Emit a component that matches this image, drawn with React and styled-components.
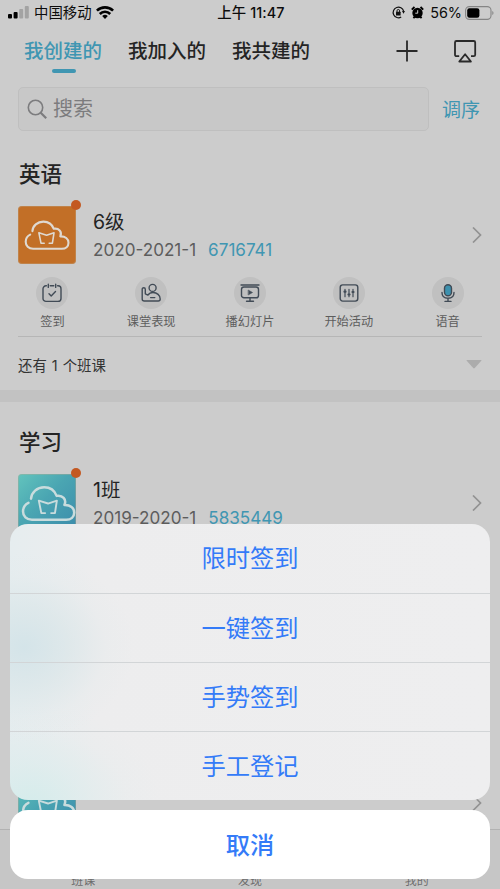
import styled, { createGlobalStyle } from "styled-components";

const GlobalStyle = createGlobalStyle`
  * {
    box-sizing: border-box;
  }
  body {
    margin: 0;
    background: #cccccc;
    font-family: Inter, "Noto Sans CJK SC", sans-serif;
  }
  svg {
    display: block;
    flex: none;
  }
`;

const Screen = styled.div`
  position: relative;
  display: flex;
  flex-direction: column;
  width: 500px;
  height: 889px;
  overflow: hidden;
  background: #cccccc;
  color: #242424;
`;

const StatusBar = styled.header`
  display: grid;
  grid-template-columns: 1fr auto 1fr;
  align-items: center;
  height: 25px;
  padding: 0 6px 0 8px;
  font-size: 14.4px;
  line-height: 25px;
  color: #0c0c0c;
  white-space: nowrap;
`;

const StatusGroup = styled.div`
  display: flex;
  align-items: center;
  justify-content: ${(p) => (p.$end ? "flex-end" : "flex-start")};
  gap: ${(p) => p.$gap}px;
`;

const Clock = styled.div`
  font-weight: 500;
  letter-spacing: 0.1px;
`;

const NavBar = styled.nav`
  display: flex;
  align-items: flex-start;
  height: 62px;
  padding: 10px 23px 0 24px;
`;

const Tab = styled.div`
  display: flex;
  flex-direction: column;
  align-items: center;
  width: 78px;
  margin-right: 26px;
  font-size: 19.5px;
  font-weight: 500;
  line-height: 33px;
  white-space: nowrap;
  color: ${(p) => (p.$active ? "#4096b2" : "#242424")};

  &::after {
    content: "";
    width: 24px;
    height: 4px;
    margin-top: 1px;
    margin-left: 2px;
    border-radius: 2px;
    background: ${(p) => (p.$active ? "#4096b2" : "transparent")};
  }
`;

const NavActions = styled.div`
  display: flex;
  align-items: center;
  gap: 35px;
  margin-left: auto;
  height: 31px;
`;

const SearchRow = styled.div`
  display: flex;
  align-items: center;
  height: 44px;
  padding: 0 20px 0 18px;
`;

const SearchBox = styled.div`
  display: flex;
  align-items: center;
  gap: 6px;
  width: 411px;
  height: 44px;
  padding-left: 8px;
  border: 1px solid #bfbfbf;
  border-radius: 5px;
  background: #c8c8c8;
  color: #7c7c7e;
  font-size: 20px;
  line-height: 40px;
`;

const SortLink = styled.div`
  margin-left: auto;
  padding-bottom: 2px;
  font-size: 19px;
  color: #4096b2;
`;

const Section = styled.section`
  padding: 0 18px;
`;

const SectionTitle = styled.h2`
  margin: 0;
  padding: ${(p) => p.$top}px 0 0 1px;
  height: ${(p) => p.$top + 47}px;
  font-size: 21.5px;
  font-weight: 500;
  line-height: 31px;
`;

const CourseHead = styled.div`
  display: flex;
  align-items: center;
  height: 58px;
  margin-top: ${(p) => p.$top || 0}px;
`;

const Cover = styled.div`
  position: relative;
  width: 58px;
  height: 58px;
  border-radius: 4px;
  background: ${(p) =>
    p.$teal ? "linear-gradient(135deg, #62c4bd 0%, #4aa5b2 45%, #3b8bab 100%)" : "#c26f27"};
  box-shadow: inset 0 0 0 1px rgba(190, 170, 140, 0.35);
`;

const Dot = styled.span`
  position: absolute;
  top: -6px;
  right: -5px;
  width: 10px;
  height: 10px;
  border-radius: 50%;
  background: #c35821;
`;

const CourseText = styled.div`
  display: flex;
  flex-direction: column;
  margin-left: 17px;
  white-space: nowrap;
`;

const CourseName = styled.div`
  font-size: 19.5px;
  line-height: 27px;
  padding-top: 3px;
`;

const CourseMeta = styled.div`
  display: flex;
  gap: 12px;
  height: 28px;
  font-size: 17.1px;
  line-height: 27px;
  color: #5d5d5d;
`;

const CourseCode = styled.span`
  color: #4096b2;
`;

const Chevron = styled.div`
  margin-left: auto;
`;

const Actions = styled.div`
  display: flex;
  justify-content: space-between;
  height: 72px;
  padding: 13px 0 0;
  margin: 0 -15px;
`;

const Action = styled.div`
  display: flex;
  flex-direction: column;
  align-items: center;
  width: 100px;
  font-size: 12.2px;
  line-height: 26px;
  color: #5d5d5d;
`;

const ActionIcon = styled.div`
  display: flex;
  align-items: center;
  justify-content: center;
  width: 32px;
  height: 32px;
  border-radius: 50%;
  background: #c0c0c0;
`;

const MoreRow = styled.div`
  display: flex;
  align-items: center;
  justify-content: space-between;
  height: 54px;
  padding-top: 2px;
  border-top: 1px solid #b6b6b6;
  font-size: 14.4px;
  word-spacing: 1px;
  color: #333333;
`;

const Divider = styled.div`
  height: 12px;
  background: #c2c2c2;
`;

const Content = styled.main`
  flex: 1;
  min-height: 0;
  overflow: hidden;
`;

const TabBar = styled.footer`
  display: flex;
  align-items: flex-end;
  height: 60px;
  border-top: 1px solid #b2b2b2;
  background: #c6c6c6;
  font-size: 12px;
  line-height: 17px;
  color: #6c6c6c;
`;

const TabItem = styled.div`
  flex: 1;
  text-align: center;
`;

const Sheet = styled.div`
  position: absolute;
  left: 10px;
  right: 10px;
  bottom: 10px;
  display: flex;
  flex-direction: column;
  gap: 10px;
  color: #347bf8;
  font-size: 24.3px;
  text-align: center;
`;

const Options = styled.div`
  overflow: hidden;
  border-radius: 18px;
  background:
    radial-gradient(
      ellipse 110px 95px at 14px 123px,
      rgba(210, 227, 232, 0.9) 0%,
      rgba(213, 228, 231, 0.55) 40%,
      rgba(222, 232, 234, 0.18) 75%,
      rgba(230, 236, 238, 0) 100%
    ),
    radial-gradient(
      ellipse 130px 100px at 20px 280px,
      rgba(212, 236, 235, 0.95) 0%,
      rgba(217, 236, 236, 0.55) 40%,
      rgba(225, 236, 237, 0.18) 75%,
      rgba(230, 236, 238, 0) 100%
    ),
    linear-gradient(90deg, #e6edef 0, #ededee 85px, #eeeeef 100%);
`;

const Option = styled.div`
  height: 69px;
  line-height: 69px;

  & + & {
    border-top: 1px solid #d2d5d7;
  }
`;

const Cancel = styled.div`
  height: 69px;
  border-radius: 18px;
  background: #ffffff;
  font-weight: 500;
  line-height: 70px;
`;

const SignalIcon = () => (
  <svg width="22" height="14" viewBox="0 0 22 14">
    <rect x="0" y="8" width="4" height="4.5" rx="1" fill="#000" />
    <rect x="5.6" y="6" width="4" height="6.5" rx="1" fill="#000" />
    <rect x="11.2" y="3" width="4" height="9.5" rx="1" fill="#a3a3a3" />
    <rect x="16.8" y="0" width="4" height="12.5" rx="1" fill="#a3a3a3" />
  </svg>
);

const WifiIcon = () => (
  <svg width="18" height="14" viewBox="0 0 18 14" fill="none" stroke="#000" strokeWidth="2.600">
    <path d="M.9 4.700a11.500 11.500 0 0 1 16.200 0" />
    <path d="M3.800 8a7.300 7.300 0 0 1 10.400 0" />
    <path d="M9 13 6.200 10.100a4 4 0 0 1 5.600 0Z" fill="#000" stroke="none" />
  </svg>
);

const LockIcon = () => (
  <svg width="13" height="13" viewBox="0 0 13 13" fill="none" stroke="#111" strokeWidth="1.2">
    <path d="M9.2 11A5.3 5.3 0 1 1 11.6 5.2" />
    <path d="M10 5.1h3l-1.5 2.6Z" fill="#111" stroke="none" />
    <rect x="4" y="5.8" width="4.6" height="3.6" rx=".5" fill="#111" stroke="none" />
    <path d="M5 6V4.8a1.3 1.3 0 0 1 2.6 0V6" strokeWidth="1" />
  </svg>
);

const AlarmIcon = () => (
  <svg width="13" height="13" viewBox="0 0 13 13">
    <circle cx="6.5" cy="7" r="5.2" fill="#000" />
    <path d="M.8 3.7 3.5 1M12.2 3.7 9.5 1M2.4 12.2l1.7-1.8M10.6 12.2 8.9 10.4" stroke="#000" strokeWidth="1.9" />
    <path d="M6.7 4.2v3H4.3" fill="none" stroke="#ccc" strokeWidth="1" />
  </svg>
);

const BatteryIcon = () => (
  <svg width="29" height="14" viewBox="0 0 29 14">
    <rect x=".6" y=".6" width="25.400" height="12.8" rx="3.8" fill="none" stroke="#858585" strokeWidth="1.1" />
    <rect x="2.2" y="2.3" width="12.2" height="9.4" rx="2.2" fill="#000" />
    <path d="M27.300 5c1.6.7 1.6 3.3 0 4Z" fill="#858585" />
  </svg>
);

const PlusIcon = () => (
  <svg width="22" height="22" viewBox="0 0 22 22" stroke="#292929" strokeWidth="1.8">
    <path d="M11 .5v21M.5 11h21" />
  </svg>
);

const CastIcon = () => (
  <svg width="24" height="24" viewBox="0 0 24 24" fill="none" stroke="#292929" strokeWidth="1.8" strokeLinejoin="round">
    <path d="M6.200 17.2H3.500a1.500 1.500 0 0 1-1.500-1.500V3.500A1.500 1.500 0 0 1 3.500 2h17.200a1.500 1.500 0 0 1 1.500 1.500v12.200a1.500 1.500 0 0 1-1.500 1.500H18" />
    <path d="m12.1 15.2 5.8 7.300H6.300Z" />
  </svg>
);

const SearchIcon = () => (
  <svg width="20" height="20" viewBox="0 0 20 20" fill="none" stroke="#7c7c7e" strokeWidth="1.6">
    <circle cx="8.500" cy="8.500" r="7.200" />
    <path d="m13.500 13.500 5.700 5.700" strokeWidth="2.2" />
  </svg>
);

const CloudLogo = ({ large }) => (
  <svg
    width="58"
    height="58"
    viewBox={large ? "3.500 4.500 48.500 48.500" : "0 0 58 58"}
    fill="none"
    stroke={large ? "#c9dcdd" : "#dfd9d1"}
    strokeWidth="2.1"
    strokeLinecap="round"
    strokeLinejoin="round"
  >
    <path d="M14.4 25.1c.4-5.3 5-9.5 11-9.5 4.7 0 8.600 2.500 10.400 7.200 4.800-.8 8.700 2.800 6.500 7.600 5-.2 8.200 2.500 8.200 6.300 0 3.700-2.800 6.100-6.700 6.100H15.100c-4.500 0-7.400-2.900-7.400-7 0-3.200 1.600-5.800 4.500-7.200" />
    <path d="M26.200 37.200h-3.200l-2.100-10.400 7.700 2.400 7.400-2.400-1.600 10.400h-3.200" strokeWidth="1.6" />
  </svg>
);

const ChevronIcon = () => (
  <svg width="10" height="16" viewBox="0 0 10 16" fill="none" stroke="#929292" strokeWidth="1.7">
    <path d="m1 .5 7.5 7.500L1 15.500" />
  </svg>
);

const LineIcon = ({ children }) => (
  <svg
    width="20"
    height="20"
    viewBox="0 0 20 20"
    fill="none"
    stroke="#414b56"
    strokeWidth="1.4"
    strokeLinecap="round"
    strokeLinejoin="round"
  >
    {children}
  </svg>
);

const actions = [
  {
    label: "签到",
    icon: (
      <>
        <path d="M4.4 2.8H4a3 3 0 0 0-3 3v9.600a3 3 0 0 0 3 3h12a3 3 0 0 0 3-3V5.800a3 3 0 0 0-3-3h-.4M8.200 2.800h3.600M6.300 1.200v3.200M13.700 1.200v3.200" />
        <path d="m7 10.700 2.200 2.200 4.300-4.300" />
      </>
    ),
  },
  {
    label: "课堂表现",
    icon: (
      <>
        <circle cx="11.600" cy="4.900" r="3.500" />
        <path d="M3.200 18h14c1.300 0 2-.8 2-2 0-3.700-3.200-6.500-7.200-6.500-2.300 0-4 1-5.100 2.600L4.300 10.800V6.200c0-1-.7-1.500-1.500-1.500S1.200 5.200 1.200 6.200V16c0 1.200.8 2 2 2ZM9.600 14.600h4.200" />
      </>
    ),
  },
  {
    label: "播幻灯片",
    icon: (
      <>
        <path d="M1 2h18" />
        <rect x="1.500" y="4" width="17" height="10.800" rx="2.400" />
        <path d="M10 15v3M6.500 18.200h7" />
        <path d="m8.500 7.200 4 2.300-4 2.300Z" fill="#414b56" strokeWidth=".6" />
      </>
    ),
  },
  {
    label: "开始活动",
    icon: (
      <>
        <rect x="1.200" y="1.900" width="17.600" height="16.200" rx="2.500" />
        <path d="M6 6.300v7.400M10 6.300v7.400M14 6.300v7.400" strokeWidth="1.200" />
        <path d="M5.500 8.700h1M9.500 11.500h1M13.500 9h1" strokeWidth="2.200" />
      </>
    ),
  },
  {
    label: "语音",
    icon: (
      <>
        <rect x="6.500" y="1.800" width="7" height="11" rx="3.500" fill="#3d91ae" />
        <path d="M4 9.500c0 3.800 2.500 5.800 6 5.800s6-2 6-5.800M10 15.300v2.900M7 18.400h6" />
      </>
    ),
  },
];

const Course = ({ name, term, code, teal, dot, top }) => (
  <CourseHead $top={top}>
    <Cover $teal={teal}>
      <CloudLogo large={teal} />
      {dot && <Dot />}
    </Cover>
    {name && (
      <CourseText>
        <CourseName>{name}</CourseName>
        <CourseMeta>
          <span>{term}</span>
          <CourseCode>{code}</CourseCode>
        </CourseMeta>
      </CourseText>
    )}
    <Chevron>
      <ChevronIcon />
    </Chevron>
  </CourseHead>
);

const App = () => {
  return (
    <>
      <GlobalStyle />
      <Screen>
        <StatusBar>
          <StatusGroup $gap={4}>
            <SignalIcon />
            <span>中国移动</span>
            <WifiIcon />
          </StatusGroup>
          <Clock>上午 11:47</Clock>
          <StatusGroup $end $gap={6}>
            <LockIcon />
            <AlarmIcon />
            <StatusGroup $gap={3}>
              <span>56%</span>
              <BatteryIcon />
            </StatusGroup>
          </StatusGroup>
        </StatusBar>
        <NavBar>
          <Tab $active>我创建的</Tab>
          <Tab>我加入的</Tab>
          <Tab>我共建的</Tab>
          <NavActions>
            <PlusIcon />
            <CastIcon />
          </NavActions>
        </NavBar>
        <Content>
          <SearchRow>
            <SearchBox>
              <SearchIcon />
              <span>搜索</span>
            </SearchBox>
            <SortLink>调序</SortLink>
          </SearchRow>
          <Section>
            <SectionTitle $top={28}>英语</SectionTitle>
            <Course name="6级" term="2020-2021-1" code="6716741" dot />
            <Actions>
              {actions.map((a) => (
                <Action key={a.label}>
                  <ActionIcon>
                    <LineIcon>{a.icon}</LineIcon>
                  </ActionIcon>
                  {a.label}
                </Action>
              ))}
            </Actions>
            <MoreRow>
              <span>还有 1 个班课</span>
              <svg width="16" height="9" viewBox="0 0 16 9">
                <path d="M1 0h14q1 0 .3.800L8.800 8q-.8.800-1.600 0L.7.800Q0 0 1 0Z" fill="#acacac" />
              </svg>
            </MoreRow>
          </Section>
          <Divider />
          <Section>
            <SectionTitle $top={25}>学习</SectionTitle>
            <Course name="1班" term="2019-2020-1" code="5835449" teal dot />
            <Course teal top={242} />
          </Section>
        </Content>
        <TabBar>
          <TabItem>班课</TabItem>
          <TabItem>发现</TabItem>
          <TabItem>我的</TabItem>
        </TabBar>
        <Sheet>
          <Options>
            <Option>限时签到</Option>
            <Option>一键签到</Option>
            <Option>手势签到</Option>
            <Option>手工登记</Option>
          </Options>
          <Cancel>取消</Cancel>
        </Sheet>
      </Screen>
    </>
  );
};

export default App;
